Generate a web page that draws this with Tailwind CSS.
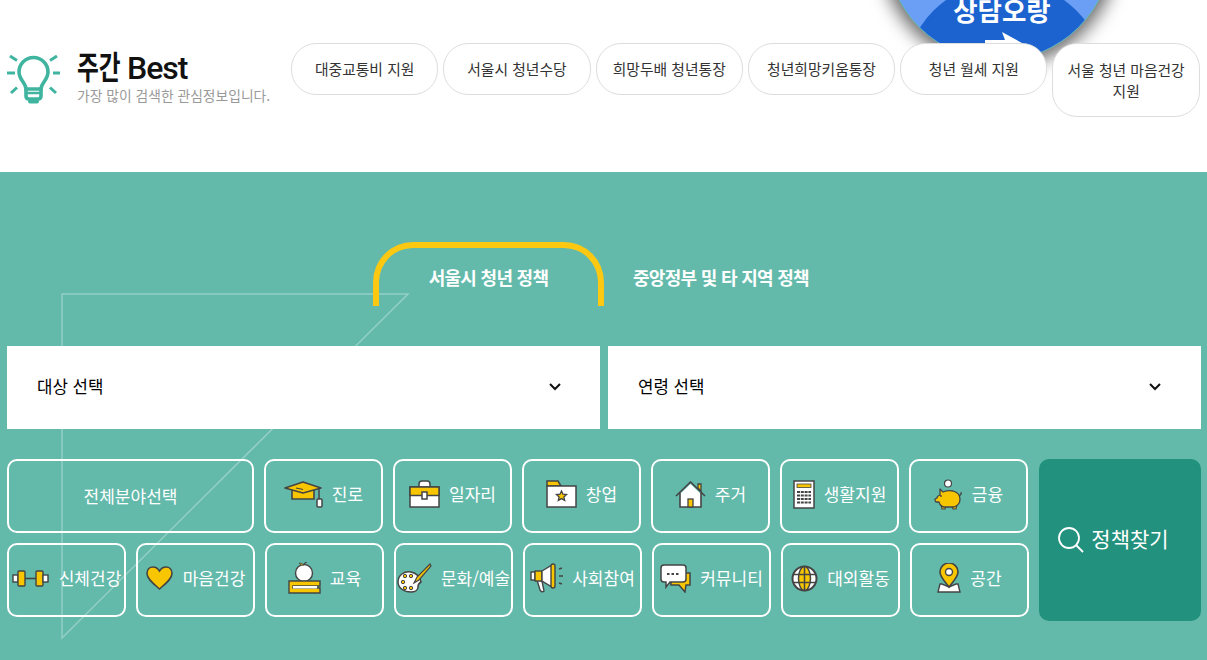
<!DOCTYPE html>
<html lang="ko">
<head>
  <meta charset="UTF-8" />
  <title>주간 Best</title>
  <script src="https://cdn.jsdelivr.net/npm/@tailwindcss/browser@4"></script>
</head>
<body class="bg-white overflow-hidden font-['Noto_Sans_CJK_KR','Noto_Sans',sans-serif]">

  <!-- consult badge, sits behind the keyword pills -->
  <div class="absolute left-[886px] top-[-165px] w-[226px] h-[226px] rounded-full overflow-hidden bg-[#6a9ff5] border border-[#63baab] shadow-[0_0_18px_6px_rgba(0,0,0,0.6)]">
    <div class="absolute left-[17px] top-[145px] w-[202px] h-[202px] rounded-full bg-[#1c63cf]"></div>
    <p class="absolute left-[3px] w-full top-[156px] text-center text-white font-bold text-[26.5px] leading-[36px] whitespace-nowrap">상담오랑</p>
    <svg class="absolute left-[98px] top-[196px]" width="38" height="24" viewBox="0 0 38 24"><path d="M0 8h20l-3-8 20 11-18 13 1-8H0z" fill="#fff"/></svg>
  </div>

  <header class="relative z-10 h-[172px] flex items-start pl-[7px] pr-[7px]">
    <div class="flex items-start w-[284px] shrink-0 mt-[55px]">
      <svg width="54" height="50" viewBox="0 0 54 50" fill="none" stroke="#3fb5a0">
        <path d="M19 34c0-6-7-9-7-17a14.500 14.500 0 0 1 29 0c0 8-7 11-7 17z" stroke-width="3.600"/>
        <path d="M19 34v7q0 3 3 3h9q3 0 3-3v-7" stroke-width="3.600"/>
        <path d="M20 38h13" stroke-width="2.500"/>
        <path d="M23 46.500h7" stroke-width="4" stroke-linecap="round"/>
        <path d="M0 18h8M46 18h7M3 1l7 4.500M50 1l-7 4.500M4 38l6-5.500M49 38l-6-5.500" stroke-width="3"/>
      </svg>
      <div class="ml-[16px] -mt-[3px]">
        <h2 class="flex items-baseline font-['Roboto','Noto_Sans_CJK_KR',sans-serif] text-[32px] leading-[32px] text-[#111] whitespace-nowrap">
          <span class="w-[50px] inline-block origin-left scale-x-[0.74] font-bold">주간</span>
          <span class="font-medium tracking-[-1px]">Best</span>
        </h2>
        <p class="text-[13.8px] leading-[18px] text-[#999] mt-[2px] whitespace-nowrap">가장 많이 검색한 관심정보입니다.</p>
      </div>
    </div>
    <nav class="flex items-start gap-[5px] mt-[43px] text-[14.8px] leading-[21px] text-[#333] text-center">
      <a class="w-[147.3px] h-[52px] pb-[2px] flex items-center justify-center rounded-[25px] border border-[#ddd] bg-white">대중교통비 지원</a>
      <a class="w-[147.3px] h-[52px] pb-[2px] flex items-center justify-center rounded-[25px] border border-[#ddd] bg-white">서울시 청년수당</a>
      <a class="w-[147.3px] h-[52px] pb-[2px] flex items-center justify-center rounded-[25px] border border-[#ddd] bg-white">희망두배 청년통장</a>
      <a class="w-[147.3px] h-[52px] pb-[2px] flex items-center justify-center rounded-[25px] border border-[#ddd] bg-white">청년희망키움통장</a>
      <a class="w-[147.3px] h-[52px] pb-[2px] flex items-center justify-center rounded-[25px] border border-[#ddd] bg-white">청년 월세 지원</a>
      <a class="w-[147.3px] h-[74px] flex items-center justify-center rounded-[25px] border border-[#ddd] bg-white px-[10px]">서울 청년 마음건강 지원</a>
    </nav>
  </header>

  <section class="relative h-[488px] bg-[#63baab] pl-[7px] pr-[6px] pt-[70px]">
    <!-- faint background shape -->
    <svg class="absolute left-[60px] top-[120px]" width="352" height="350" viewBox="0 0 352 350" fill="none" stroke="#fff" stroke-opacity="0.3" stroke-width="1.500"><path d="M2 2h346L2 346z"/></svg>

    <div class="relative flex h-[64px] pl-[366px]">
      <div class="w-[231px] h-[64px] border-[6px] border-b-0 border-[#fcc812] rounded-t-[40px] flex items-center justify-center">
        <span class="text-white font-bold text-[18px] tracking-[-0.7px]">서울시 청년 정책</span>
      </div>
      <div class="ml-[29px] h-[64px] pt-[6px] flex items-center">
        <span class="text-white font-bold text-[18px] tracking-[-0.7px]">중앙정부 및 타 지역 정책</span>
      </div>
    </div>

    <div class="relative flex gap-[8px] mt-[40px]">
      <div class="w-[593px] h-[83px] pb-[1px] bg-white flex items-center justify-between pl-[30px] pr-[39px] text-[16.8px] text-black">
        <span>대상 선택</span>
        <svg width="12" height="8" viewBox="0 0 12 8" fill="none" stroke="#111" stroke-width="2"><path d="M1 1l5 5 5-5"/></svg>
      </div>
      <div class="w-[593px] h-[83px] pb-[1px] bg-white flex items-center justify-between pl-[30px] pr-[40px] text-[16.8px] text-black">
        <span>연령 선택</span>
        <svg width="12" height="8" viewBox="0 0 12 8" fill="none" stroke="#111" stroke-width="2"><path d="M1 1l5 5 5-5"/></svg>
      </div>
    </div>

    <div class="relative flex gap-[10px] mt-[30px]">
      <div class="flex flex-col gap-[10px] text-[17px] text-white whitespace-nowrap">
        <div class="flex gap-[10px]">
          <a class="w-[247px] h-[74px] rounded-[10px] border-2 border-white flex items-center justify-center">전체분야선택</a>
          <a class="w-[119px] h-[74px] rounded-[10px] border-2 border-white flex items-center justify-center gap-[9px] pb-[4px]">
            <svg width="39" height="27" viewBox="0 0 39 27"><path d="M8 9v9h22V9z" fill="#f7c600" stroke="#444" stroke-width="1.600"/><path d="M1 7l18-6 18 6-18 5z" fill="#f7c600" stroke="#444" stroke-width="1.600" stroke-linejoin="round"/><path d="M12 7l7 1.500" stroke="#444" stroke-width="1.200" fill="none"/><path d="M35 7v11" stroke="#444" stroke-width="1.500"/><rect x="33" y="18" width="5" height="8" rx="1" fill="#fff" stroke="#444" stroke-width="1.500"/></svg>
            <span>진로</span>
          </a>
          <a class="w-[119px] h-[74px] rounded-[10px] border-2 border-white flex items-center justify-center gap-[9px] pb-[4px]">
            <svg width="31" height="28" viewBox="0 0 31 28"><path d="M10 7V4q0-3 3-3h5q3 0 3 3v3" fill="#fff" stroke="#444" stroke-width="1.500"/><rect x="1" y="7" width="29" height="20" fill="#fff" stroke="#444" stroke-width="1.500"/><rect x="1" y="7" width="29" height="8.500" fill="#f7c600" stroke="#444" stroke-width="1.500"/><rect x="13" y="12" width="5" height="7" fill="#fff" stroke="#444" stroke-width="1.500"/></svg>
            <span>일자리</span>
          </a>
          <a class="w-[119px] h-[74px] rounded-[10px] border-2 border-white flex items-center justify-center gap-[9px] pb-[4px]">
            <svg width="31" height="28" viewBox="0 0 31 28"><path d="M1 6V1h11l3 5z" fill="#f7c600" stroke="#444" stroke-width="1.500"/><rect x="1" y="6" width="29" height="21" fill="#fff" stroke="#444" stroke-width="1.500"/><path d="M15.500 11l1.500 3.200 3.500.4-2.600 2.300.8 3.500-3.200-1.800-3.200 1.800.8-3.500-2.600-2.300 3.500-.4z" fill="#f7c600" stroke="#444" stroke-width="1.300"/></svg>
            <span>창업</span>
          </a>
          <a class="w-[119px] h-[74px] rounded-[10px] border-2 border-white flex items-center justify-center gap-[9px] pb-[4px]">
            <svg width="31" height="27" viewBox="0 0 31 27"><path d="M23 7V3h3v7z" fill="#f7c600" stroke="#444" stroke-width="1.300"/><path d="M5 13v13h21V13L15.500 3z" fill="#fff"/><path d="M1 15L15.500 1 30 15M5 12v14h21V12" fill="none" stroke="#444" stroke-width="1.600"/><rect x="13" y="18" width="5" height="8" fill="#f7c600" stroke="#444" stroke-width="1.300"/></svg>
            <span>주거</span>
          </a>
          <a class="w-[119px] h-[74px] rounded-[10px] border-2 border-white flex items-center justify-center gap-[9px] pb-[4px]">
            <svg width="22" height="29" viewBox="0 0 22 29"><rect x="1" y="1" width="20" height="27" fill="#fff" stroke="#444" stroke-width="1.500"/><rect x="4" y="4" width="14" height="3.500" fill="#f7c600" stroke="#444" stroke-width=".8"/><path d="M4 12h14M4 15.500h14M4 19h14M4 22.500h14" stroke="#444" stroke-width="2" stroke-dasharray="3 .8"/></svg>
            <span>생활지원</span>
          </a>
          <a class="w-[119px] h-[74px] rounded-[10px] border-2 border-white flex items-center justify-center gap-[9px] pb-[4px]">
            <svg width="29" height="31" viewBox="0 0 29 31"><circle cx="14" cy="4.500" r="3.500" fill="#fff" stroke="#444" stroke-width="1.200"/><path d="M7 25l1 5h3l1-3h6l1 3h3l1-5z" fill="#f7c600" stroke="#444" stroke-width="1.200"/><path d="M27 13q1 3-3 4" fill="none" stroke="#444" stroke-width="1.300"/><path d="M6 10l3 3q5-2 10-1 7 2 7 8t-6 8H10q-4-1-5-5H2q-1-1-1-3l2-1q0-2 3-3z" fill="#f7c600" stroke="#444" stroke-width="1.300" stroke-linejoin="round"/><circle cx="7" cy="17" r=".9" fill="#444"/></svg>
            <span>금융</span>
          </a>
        </div>
        <div class="flex gap-[10px]">
          <a class="w-[119px] h-[74px] rounded-[10px] border-2 border-white flex items-center justify-center gap-[10px] pb-[4px]">
            <svg class="shrink-0" width="37" height="17" viewBox="0 0 37 17"><path d="M7 8.500h23" stroke="#444" stroke-width="1.600"/><rect x="1" y="5" width="5" height="7" fill="#fff" stroke="#444" stroke-width="1.400"/><rect x="6" y="1" width="7" height="15" rx="1" fill="#f7c600" stroke="#444" stroke-width="1.400"/><rect x="24" y="1" width="7" height="15" rx="1" fill="#f7c600" stroke="#444" stroke-width="1.400"/><rect x="31" y="5" width="5" height="7" fill="#fff" stroke="#444" stroke-width="1.400"/></svg>
            <span>신체건강</span>
          </a>
          <a class="w-[119px] h-[74px] rounded-[10px] border-2 border-white flex items-center justify-center gap-[10px] pb-[4px]">
            <svg class="shrink-0" width="27" height="24" viewBox="0 0 27 24"><path d="M13.500 23C8 18 1 13 1 7.500 1 3 4 1 7 1c3 0 5 1.500 6.500 4C15 2.500 17 1 20 1c3 0 6 2 6 6.500C26 13 19 18 13.500 23z" fill="#f7c600" stroke="#444" stroke-width="1.600"/></svg>
            <span>마음건강</span>
          </a>
          <a class="w-[119px] h-[74px] rounded-[10px] border-2 border-white flex items-center justify-center gap-[9px] pb-[4px]">
            <svg class="shrink-0" width="33" height="32" viewBox="0 0 33 32"><circle cx="16" cy="11" r="8.500" fill="#fff" stroke="#444" stroke-width="1.400"/><path d="M16 3q0-2 3-3" stroke="#444" stroke-width="1.200" fill="none"/><path d="M11 1q3 0 5 2-3 1-5-2z" fill="#f7c600" stroke="#444" stroke-width=".8"/><path d="M1 19h31v5H5v2h27v5H1z" fill="#f7c600" stroke="#444" stroke-width="1.400"/><rect x="5" y="24" width="24" height="2.500" fill="#fff"/></svg>
            <span>교육</span>
          </a>
          <a class="w-[119px] h-[74px] rounded-[10px] border-2 border-white flex items-center justify-center gap-[9px] pb-[4px]">
            <svg class="shrink-0" width="35" height="30" viewBox="0 0 35 30"><path d="M14 9C7 8 1 12 1 19c0 6 6 10 13 10 4 0 7-2 7-5 0-3 1-4 3-5-1-5-5-9-10-10z" fill="#fff" stroke="#444" stroke-width="1.500"/><path d="M33 1L20 14l-3 6 5-3L34 3z" fill="#f7c600" stroke="#444" stroke-width="1.200"/><g fill="#f7c600" stroke="#444" stroke-width="1"><circle cx="8" cy="13" r="1.700"/><circle cx="14" cy="13" r="1.700"/><circle cx="6" cy="19" r="1.700"/><circle cx="8" cy="25" r="1.700"/><circle cx="14" cy="25" r="1.700"/></g></svg>
            <span>문화/예술</span>
          </a>
          <a class="w-[119px] h-[74px] rounded-[10px] border-2 border-white flex items-center justify-center gap-[9px] pb-[4px]">
            <svg class="shrink-0" width="33" height="30" viewBox="0 0 33 30"><path d="M7 17l3 10q2 3 4 1l-2-10z" fill="#fff" stroke="#444" stroke-width="1.400"/><rect x="1" y="9" width="4" height="8" fill="#fff" stroke="#444" stroke-width="1.400"/><rect x="5" y="8" width="7" height="10" fill="#f7c600" stroke="#444" stroke-width="1.400"/><path d="M12 8L22 2v22l-10-6z" fill="#fff" stroke="#444" stroke-width="1.400"/><rect x="21" y="1" width="4" height="24" rx="2" fill="#f7c600" stroke="#444" stroke-width="1.400"/><path d="M29 6l3-1M29 13h4M29 20l3 1" stroke="#444" stroke-width="1.400"/></svg>
            <span>사회참여</span>
          </a>
          <a class="w-[119px] h-[74px] rounded-[10px] border-2 border-white flex items-center justify-center gap-[9px] pb-[4px]">
            <svg class="shrink-0" width="31" height="29" viewBox="0 0 31 29"><path d="M27 9h3v12h-4l-1 7-6-7h-8V9z" fill="#f7c600" stroke="#444" stroke-width="1.500"/><path d="M4 1h19q3 0 3 3v11q0 3-3 3H10l-4 5v-5H4q-3 0-3-3V4q0-3 3-3z" fill="#fff" stroke="#444" stroke-width="1.500"/><path d="M7 10h13" stroke="#444" stroke-width="2" stroke-dasharray="2.500 2"/></svg>
            <span>커뮤니티</span>
          </a>
          <a class="w-[119px] h-[74px] rounded-[10px] border-2 border-white flex items-center justify-center gap-[9px] pb-[4px]">
            <svg class="shrink-0" width="27" height="27" viewBox="0 0 27 27"><circle cx="13.500" cy="13.500" r="12" fill="#fff" stroke="#444" stroke-width="2"/><ellipse cx="13.500" cy="13.500" rx="6" ry="12" fill="#f7c600" stroke="#444" stroke-width="1.500"/><path d="M2 9.500h23M2 17.500h23M13.500 1v25" stroke="#444" stroke-width="1.500" fill="none"/></svg>
            <span>대외활동</span>
          </a>
          <a class="w-[119px] h-[74px] rounded-[10px] border-2 border-white flex items-center justify-center gap-[9px] pb-[4px]">
            <svg class="shrink-0" width="24" height="30" viewBox="0 0 24 30"><path d="M5 21H3l-2 8h22l-2-8h-2l-7 3z" fill="#fff" stroke="#444" stroke-width="1.400"/><path d="M12 24C7 17 3 14 3 9a9 9 0 0 1 18 0c0 5-4 8-9 15z" fill="#f7c600" stroke="#444" stroke-width="1.600"/><circle cx="12" cy="9" r="3.500" fill="#fff" stroke="#444" stroke-width="1.400"/></svg>
            <span>공간</span>
          </a>
        </div>
      </div>
      <a class="w-[162px] h-[162px] rounded-[10px] bg-[#22917d] flex items-center justify-center gap-[7px] pr-[13px] text-white text-[21px]">
        <svg class="shrink-0" width="26" height="26" viewBox="0 0 26 26" fill="none" stroke="#fff" stroke-width="1.800"><circle cx="11" cy="11" r="10"/><path d="M18 18l7 7"/></svg>
        <span class="pb-[2px]">정책찾기</span>
      </a>
    </div>
  </section>
</body>
</html>
